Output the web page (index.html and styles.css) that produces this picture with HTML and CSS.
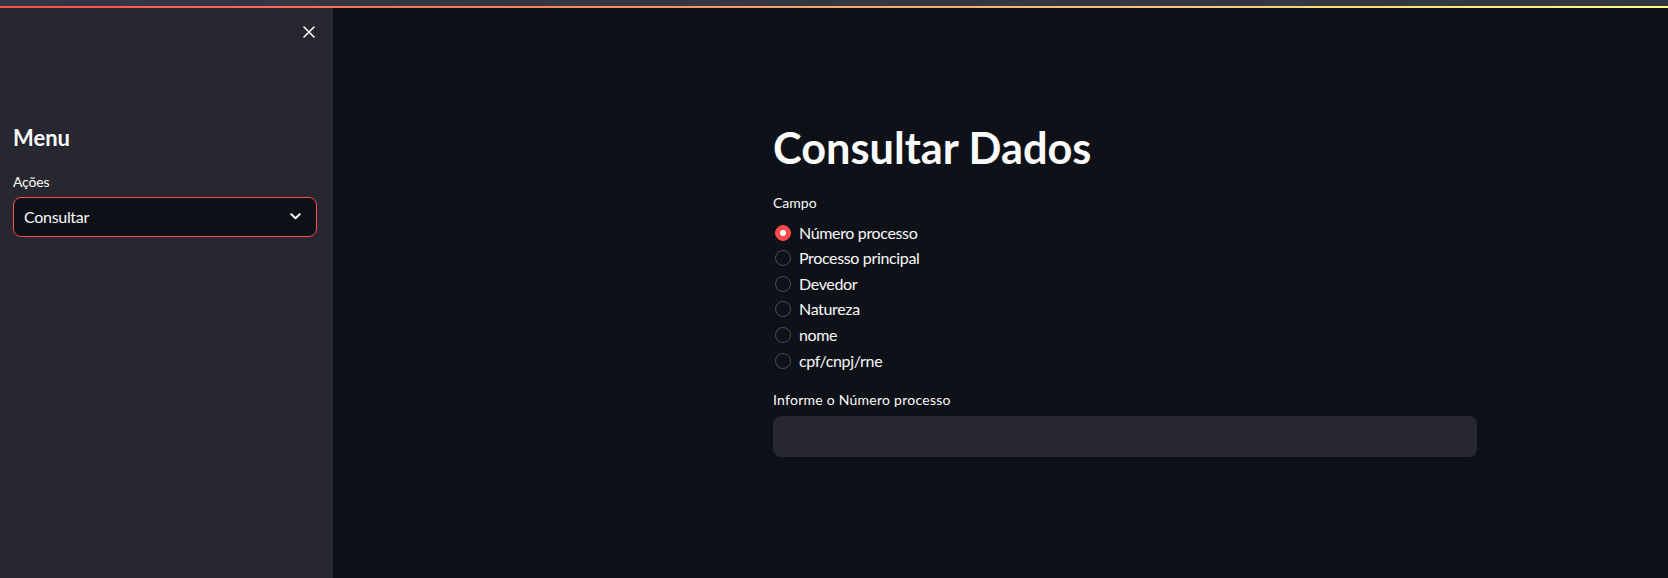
FILE: index.html
```html
<!DOCTYPE html>
<html lang="pt-BR">
<head>
<meta charset="utf-8">
<title>Consultar Dados</title>
<link rel="stylesheet" href="styles.css">
</head>
<body>
<div class="topbar"></div>
<div class="decoration"></div>
<div class="app">
  <aside class="sidebar">
    <div class="sidebar-head">
      <button class="close-btn" aria-label="Fechar">
        <svg width="12" height="12" viewBox="0 0 12 12"><path d="M1 1L11 11M11 1L1 11" stroke="#fafafa" stroke-width="1.6" stroke-linecap="round"/></svg>
      </button>
    </div>
    <h2 class="side-title">Menu</h2>
    <div class="label">Ações</div>
    <div class="select">
      <span class="select-value">Consultar</span>
      <svg class="chevron" width="11" height="7" viewBox="0 0 11 7"><path d="M1.3 1.3L5.5 5.3L9.7 1.3" fill="none" stroke="#fafafa" stroke-width="2" stroke-linecap="round" stroke-linejoin="round"/></svg>
    </div>
  </aside>
  <main class="main">
    <div class="block">
      <h1 class="title">Consultar Dados</h1>
      <div class="label">Campo</div>
      <div class="radios">
        <div class="radio checked"><span class="dot"></span><span class="radio-text">Número processo</span></div>
        <div class="radio"><span class="dot"></span><span class="radio-text">Processo principal</span></div>
        <div class="radio"><span class="dot"></span><span class="radio-text">Devedor</span></div>
        <div class="radio"><span class="dot"></span><span class="radio-text">Natureza</span></div>
        <div class="radio"><span class="dot"></span><span class="radio-text">nome</span></div>
        <div class="radio"><span class="dot"></span><span class="radio-text">cpf/cnpj/rne</span></div>
      </div>
      <div class="label input-label">Informe o Número processo</div>
      <div class="input"></div>
    </div>
  </main>
</div>
</body>
</html>
```
FILE: styles.css
```css
* { box-sizing: border-box; }
html, body {
  margin: 0;
  padding: 0;
  height: 578px;
  overflow: hidden;
  background: #0e1117;
  color: #fafafa;
  font-family: Lato, "Noto Sans", sans-serif;
}
.topbar {
  height: 6px;
  background: #323542;
}
.decoration {
  height: 2px;
  background: linear-gradient(90deg, rgb(255, 75, 75), rgb(255, 253, 128));
}
.app {
  display: flex;
  height: 570px;
}
.sidebar {
  width: 333px;
  flex: none;
  background: #262730;
  padding: 0 16px 0 13px;
}
.sidebar-head {
  height: 48px;
  display: flex;
  align-items: center;
  justify-content: flex-end;
  padding-right: 2px;
}
.close-btn {
  background: none;
  border: 0;
  padding: 0;
  width: 12px;
  height: 12px;
  display: flex;
}
.side-title {
  margin: 66px 0 0 0;
  font-size: 22px;
  line-height: 32px;
  font-weight: 700;
}
.label {
  font-size: 14px;
  line-height: 20px;
  color: #fafafa;
}
.sidebar .label {
  margin-top: 17.6px;
  letter-spacing: -0.2px;
}
.select {
  margin-top: 5.4px;
  height: 40px;
  border: 1px solid #ff4b4b;
  border-radius: 8px;
  background: #0e1117;
  display: flex;
  align-items: center;
  justify-content: space-between;
  padding: 0 15px 0 10px;
}
.select-value {
  font-size: 16px;
  letter-spacing: -0.3px;
}
.chevron { display: block; }
.main {
  flex: 1;
  padding-top: 113px;
}
.block {
  margin-left: 440px;
  width: 704px;
}
.title {
  margin: 0;
  font-size: 43.3px;
  line-height: 52px;
  font-weight: 700;
}
.block > .label {
  margin-top: 19.6px;
}
.radios {
  margin-top: 7.3px;
  display: flex;
  flex-direction: column;
}
.radio {
  height: 25.6px;
  display: flex;
  align-items: center;
  padding-left: 2px;
}
.dot {
  width: 16px;
  height: 16px;
  border-radius: 50%;
  border: 1px solid rgba(250, 250, 250, 0.25);
  margin-right: 8px;
  flex: none;
  display: flex;
  align-items: center;
  justify-content: center;
}
.radio.checked .dot {
  background: #ff4b4b;
  border-color: #ff4b4b;
}
.radio.checked .dot::after {
  content: "";
  width: 6px;
  height: 6px;
  border-radius: 50%;
  background: #fff;
}
.radio-text {
  font-size: 16px;
  line-height: 20px;
  letter-spacing: -0.35px;
}
.block > .input-label {
  margin-top: 16.5px;
  letter-spacing: 0.25px;
}
.input {
  margin-top: 6.4px;
  height: 41px;
  border-radius: 8px;
  background: #262730;
}
```
